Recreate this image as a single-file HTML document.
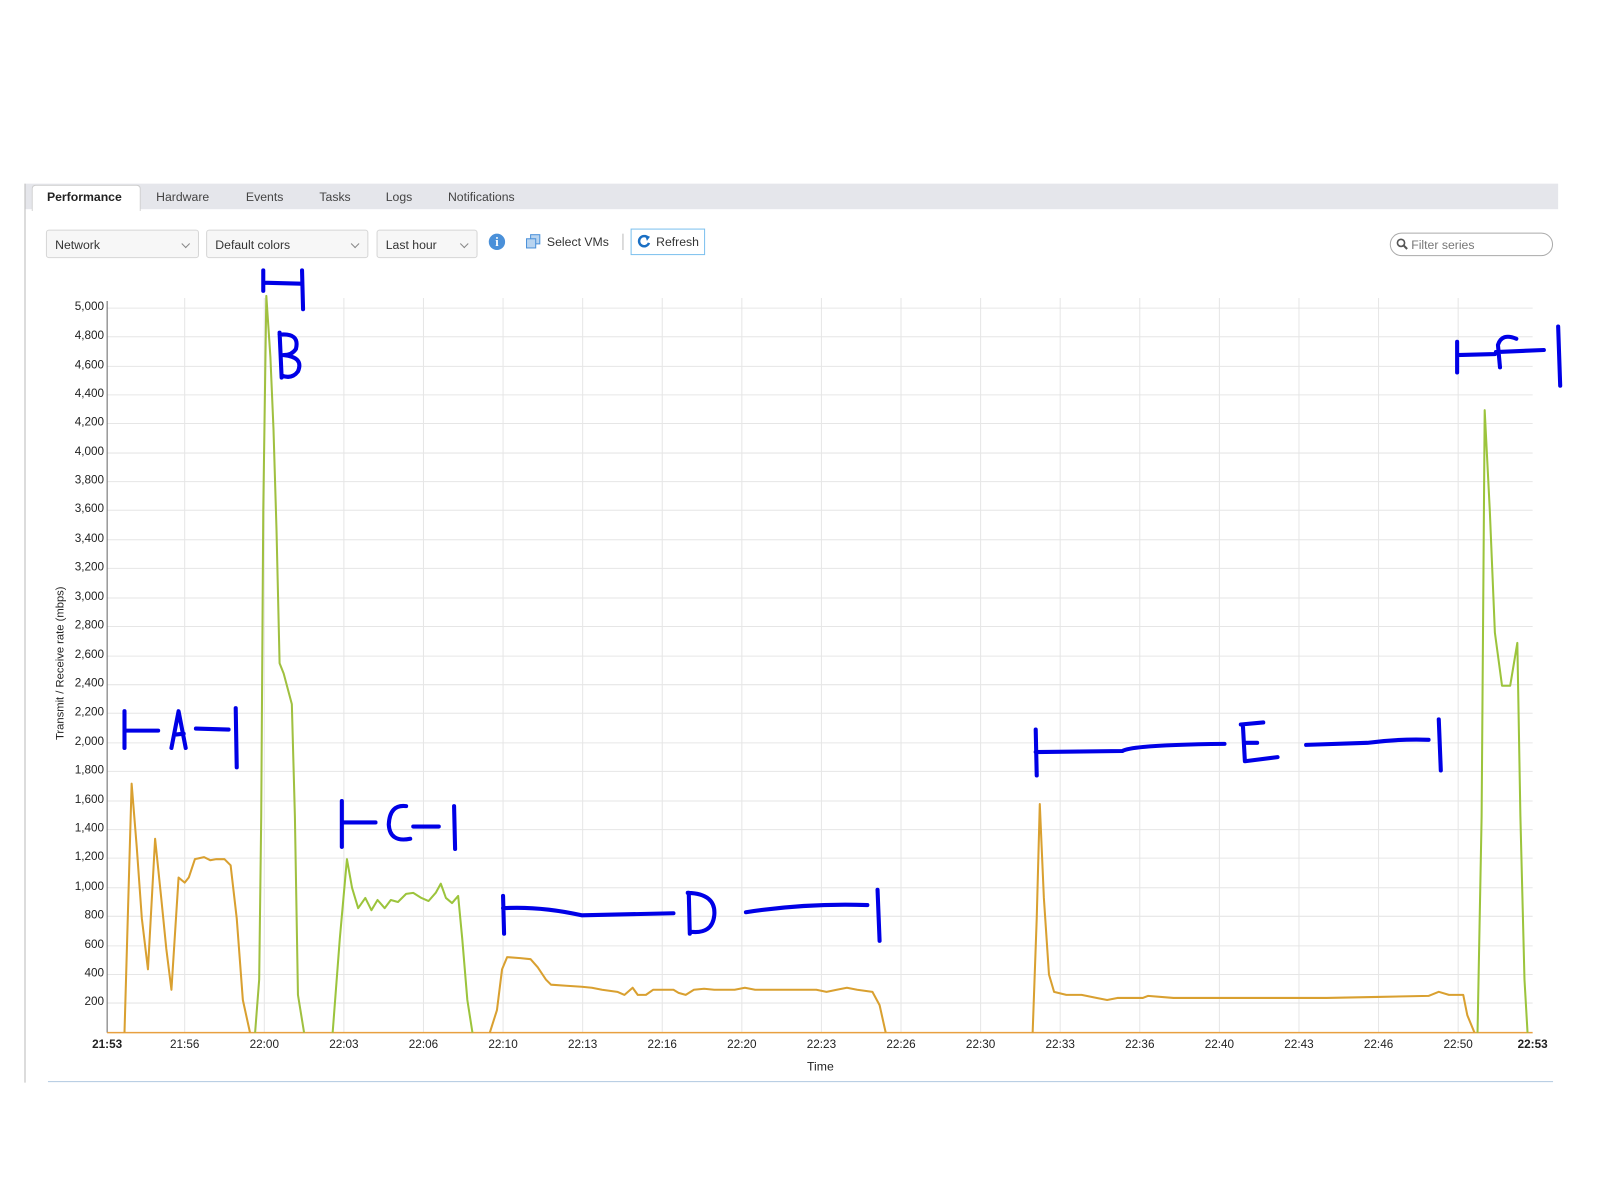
<!DOCTYPE html>
<html><head><meta charset="utf-8"><style>
html,body{margin:0;padding:0;background:#fff;width:1600px;height:1200px;overflow:hidden}
#w{position:absolute;left:0;top:0;width:1568px;height:1176px;transform:scale(1.0204);transform-origin:0 0;font-family:"Liberation Sans",sans-serif;color:#333}
.a{position:absolute}
.tab{position:absolute;top:186px;font-size:12px;color:#444}
.dd{position:absolute;top:225px;height:28px;border:1px solid #d6d6d6;border-radius:3px;background:#f7f7f7;font-size:12px;line-height:28px;padding-left:8px;box-sizing:border-box;color:#333}
.dd:after{content:"";position:absolute;right:9px;top:10px;width:5px;height:5px;border-right:1px solid #888;border-bottom:1px solid #888;transform:rotate(45deg)}
.yl{position:absolute;right:1466px;font-size:11.5px;color:#222;text-align:right}
.xl{position:absolute;top:1018px;font-size:11.5px;color:#222;transform:translateX(-50%)}
</style></head><body><div id="w">
<div class="a" style="left:24px;top:180px;width:1503px;height:25px;background:#e5e6eb"></div>
<div class="a" style="left:24px;top:180px;width:1px;height:881px;background:#bbb"></div>
<div class="a" style="left:31px;top:181px;width:105px;height:25px;background:#fff;border:1px solid #ccc;border-bottom:none;border-radius:4px 4px 0 0"></div>
<div class="tab" style="left:46px;font-weight:bold;color:#222">Performance</div>
<div class="tab" style="left:153px">Hardware</div>
<div class="tab" style="left:241px">Events</div>
<div class="tab" style="left:313px">Tasks</div>
<div class="tab" style="left:378px">Logs</div>
<div class="tab" style="left:439px">Notifications</div>
<div class="dd" style="left:45px;width:150px">Network</div>
<div class="dd" style="left:202px;width:159px">Default colors</div>
<div class="dd" style="left:369px;width:99px">Last hour</div>
<div class="a" style="left:479px;top:229px;width:16px;height:16px;border-radius:50%;background:#4a90d9;color:#fff;font-size:12px;font-weight:bold;text-align:center;line-height:16px;font-family:'Liberation Serif',serif">i</div>
<svg class="a" style="left:515px;top:229px" width="16" height="16"><rect x="5" y="1" width="9" height="9" fill="#b8d4f0" stroke="#4a90d9"/><rect x="1" y="5" width="9" height="9" fill="#b8d4f0" stroke="#4a90d9"/></svg>
<div class="a" style="left:536px;top:230px;font-size:12px">Select VMs</div>
<div class="a" style="left:610px;top:229px;width:1px;height:16px;background:#bbb"></div>
<div class="a" style="left:618px;top:224px;width:73px;height:26px;border:1px solid #7cc0ee;box-sizing:border-box;background:#fff"></div>
<svg class="a" style="left:624px;top:229px" width="15" height="15"><path d="M11 4 A5 5 0 1 0 12 9" fill="none" stroke="#1a6fc4" stroke-width="2.4"/><path d="M8 1 L13 3 L10 7 Z" fill="#1a6fc4"/></svg>
<div class="a" style="left:643px;top:230px;font-size:12px">Refresh</div>
<div class="a" style="left:1362px;top:228px;width:160px;height:23px;border:1px solid #aaa;border-radius:12px;box-sizing:border-box"></div>
<svg class="a" style="left:1368px;top:233px" width="12" height="12"><circle cx="5" cy="5" r="3.5" fill="none" stroke="#555" stroke-width="1.6"/><path d="M7.5 7.5 L11 11" stroke="#555" stroke-width="2"/></svg>
<div class="a" style="left:1383px;top:233px;font-size:12px;color:#777">Filter series</div>

<svg class="a" style="left:0;top:0" width="1568" height="1176">
<g stroke="#e6e6e6" stroke-width="1">
<line x1="105" x2="1502" y1="302" y2="302"/><line x1="105" x2="1502" y1="330" y2="330"/><line x1="105" x2="1502" y1="359" y2="359"/><line x1="105" x2="1502" y1="387" y2="387"/><line x1="105" x2="1502" y1="415" y2="415"/><line x1="105" x2="1502" y1="444" y2="444"/><line x1="105" x2="1502" y1="472" y2="472"/><line x1="105" x2="1502" y1="500" y2="500"/><line x1="105" x2="1502" y1="529" y2="529"/><line x1="105" x2="1502" y1="557" y2="557"/><line x1="105" x2="1502" y1="586" y2="586"/><line x1="105" x2="1502" y1="614" y2="614"/><line x1="105" x2="1502" y1="643" y2="643"/><line x1="105" x2="1502" y1="671" y2="671"/><line x1="105" x2="1502" y1="699" y2="699"/><line x1="105" x2="1502" y1="728" y2="728"/><line x1="105" x2="1502" y1="756" y2="756"/><line x1="105" x2="1502" y1="785" y2="785"/><line x1="105" x2="1502" y1="813" y2="813"/><line x1="105" x2="1502" y1="841" y2="841"/><line x1="105" x2="1502" y1="870" y2="870"/><line x1="105" x2="1502" y1="898" y2="898"/><line x1="105" x2="1502" y1="927" y2="927"/><line x1="105" x2="1502" y1="955" y2="955"/><line x1="105" x2="1502" y1="983" y2="983"/>
<line x1="181" x2="181" y1="292" y2="1012"/><line x1="259" x2="259" y1="292" y2="1012"/><line x1="337" x2="337" y1="292" y2="1012"/><line x1="415" x2="415" y1="292" y2="1012"/><line x1="493" x2="493" y1="292" y2="1012"/><line x1="571" x2="571" y1="292" y2="1012"/><line x1="649" x2="649" y1="292" y2="1012"/><line x1="727" x2="727" y1="292" y2="1012"/><line x1="805" x2="805" y1="292" y2="1012"/><line x1="883" x2="883" y1="292" y2="1012"/><line x1="961" x2="961" y1="292" y2="1012"/><line x1="1039" x2="1039" y1="292" y2="1012"/><line x1="1117" x2="1117" y1="292" y2="1012"/><line x1="1195" x2="1195" y1="292" y2="1012"/><line x1="1273" x2="1273" y1="292" y2="1012"/><line x1="1351" x2="1351" y1="292" y2="1012"/><line x1="1429" x2="1429" y1="292" y2="1012"/>
</g>
<line x1="105" x2="105" y1="295" y2="1012" stroke="#666"/>
<line x1="105" x2="1502" y1="1012" y2="1012" stroke="#e8a040" stroke-width="1.5"/>
<line x1="47" x2="1522" y1="1060" y2="1060" stroke="#b0c8e0"/>
<g fill="none" stroke-width="2" stroke-linejoin="round">
<polyline stroke="#d9a030" points="122,1012 129,768 134,830 139,900 145,950 152,822 158,880 163,930 168,970 175,860 181,865 185,860 191,842 200,840 206,843 212,842 220,842 226,848 232,900 238,980 245,1012"/>
<polyline stroke="#a0c040" points="250,1012 254,960 256,800 258,500 261,290 265,350 268,420 271,520 274,650 278,660 286,690 289,800 292,975 298,1012"/>
<polyline stroke="#9cc43c" points="326,1012 333,920 340,842 345,870 351,890 358,880 364,892 370,882 377,890 383,882 390,884 398,876 405,875 413,880 420,883 427,875 432,866 437,880 443,885 449,878 453,920 458,980 463,1012"/>
<polyline stroke="#d9a030" points="480,1012 487,990 492,950 497,938 510,939 520,940 527,948 535,960 540,965 555,966 570,967 580,968 590,970 605,972 612,975 620,968 625,975 633,975 640,970 650,970 660,970 665,973 672,975 680,970 690,969 700,970 720,970 730,968 740,970 760,970 780,970 800,970 810,972 820,970 830,968 840,970 855,972 862,985 868,1012"/>
<polyline stroke="#d9a030" points="1012,1012 1016,900 1019,788 1023,880 1028,955 1033,972 1045,975 1060,975 1075,978 1085,980 1095,978 1120,978 1125,976 1150,978 1200,978 1250,978 1300,978 1350,977 1400,976 1410,972 1420,975 1434,975 1438,995 1445,1012"/>
<polyline stroke="#9cc43c" points="1448,1012 1452,800 1455,402 1460,500 1465,620 1472,672 1480,672 1487,630 1490,800 1494,960 1497,1012"/>
</g>
<g fill="none" stroke="#0000e6" stroke-width="4" stroke-linecap="round" stroke-linejoin="round">
<path d="M122 697 L122 733 M122 716 L155 716 M168 733 L175 697 L182 733 M171 720 L180 719 M192 714 L224 715 M231 694 L232 752"/>
<path d="M258 265 L258 285 M258 277 L295 278 M296 265 L297 303"/>
<path d="M274 326 L276 370 M274 328 Q294 326 290 342 Q286 348 278 348 Q298 350 292 364 Q286 372 276 368"/>
<path d="M335 785 L335 830 M335 806 L368 806 M398 790 Q382 788 381 808 Q382 826 402 822 M405 810 L430 810 M445 790 L446 832"/>
<path d="M493 878 L494 915 M493 890 Q530 888 570 897 L660 895 M675 875 L676 915 M674 875 Q702 876 700 897 Q698 916 676 913 M731 894 Q790 885 850 887 M860 872 L862 922"/>
<path d="M1015 715 L1016 760 M1015 737 L1100 736 Q1110 730 1200 729 M1218 710 L1220 746 M1216 710 L1238 708 M1220 728 L1232 728 M1220 746 L1252 742 M1280 730 L1340 728 Q1370 724 1400 725 M1410 705 L1412 755"/>
<path d="M1428 335 L1428 365 M1428 348 L1465 347 M1486 332 Q1472 326 1468 338 L1470 360 M1466 345 L1513 343 M1527 320 L1529 378"/>
</g>
<text x="62" y="650" transform="rotate(-90 62 650)" text-anchor="middle" font-family="Liberation Sans" font-size="11" fill="#222">Transmit / Receive rate (mbps)</text>
<text x="804" y="1049" text-anchor="middle" font-family="Liberation Sans" font-size="12" fill="#222">Time</text>
</svg>

<div class="yl" style="top:295px">5,000</div><div class="yl" style="top:323px">4,800</div><div class="yl" style="top:352px">4,600</div><div class="yl" style="top:380px">4,400</div><div class="yl" style="top:408px">4,200</div><div class="yl" style="top:437px">4,000</div><div class="yl" style="top:465px">3,800</div><div class="yl" style="top:493px">3,600</div><div class="yl" style="top:522px">3,400</div><div class="yl" style="top:550px">3,200</div><div class="yl" style="top:579px">3,000</div><div class="yl" style="top:607px">2,800</div><div class="yl" style="top:636px">2,600</div><div class="yl" style="top:664px">2,400</div><div class="yl" style="top:692px">2,200</div><div class="yl" style="top:721px">2,000</div><div class="yl" style="top:749px">1,800</div><div class="yl" style="top:778px">1,600</div><div class="yl" style="top:806px">1,400</div><div class="yl" style="top:834px">1,200</div><div class="yl" style="top:863px">1,000</div><div class="yl" style="top:891px">800</div><div class="yl" style="top:920px">600</div><div class="yl" style="top:948px">400</div><div class="yl" style="top:976px">200</div>

<div class="xl" style="left:105px;font-weight:bold">21:53</div><div class="xl" style="left:181px">21:56</div><div class="xl" style="left:259px">22:00</div><div class="xl" style="left:337px">22:03</div><div class="xl" style="left:415px">22:06</div><div class="xl" style="left:493px">22:10</div><div class="xl" style="left:571px">22:13</div><div class="xl" style="left:649px">22:16</div><div class="xl" style="left:727px">22:20</div><div class="xl" style="left:805px">22:23</div><div class="xl" style="left:883px">22:26</div><div class="xl" style="left:961px">22:30</div><div class="xl" style="left:1039px">22:33</div><div class="xl" style="left:1117px">22:36</div><div class="xl" style="left:1195px">22:40</div><div class="xl" style="left:1273px">22:43</div><div class="xl" style="left:1351px">22:46</div><div class="xl" style="left:1429px">22:50</div><div class="xl" style="left:1502px;font-weight:bold">22:53</div>
</div></body></html>
